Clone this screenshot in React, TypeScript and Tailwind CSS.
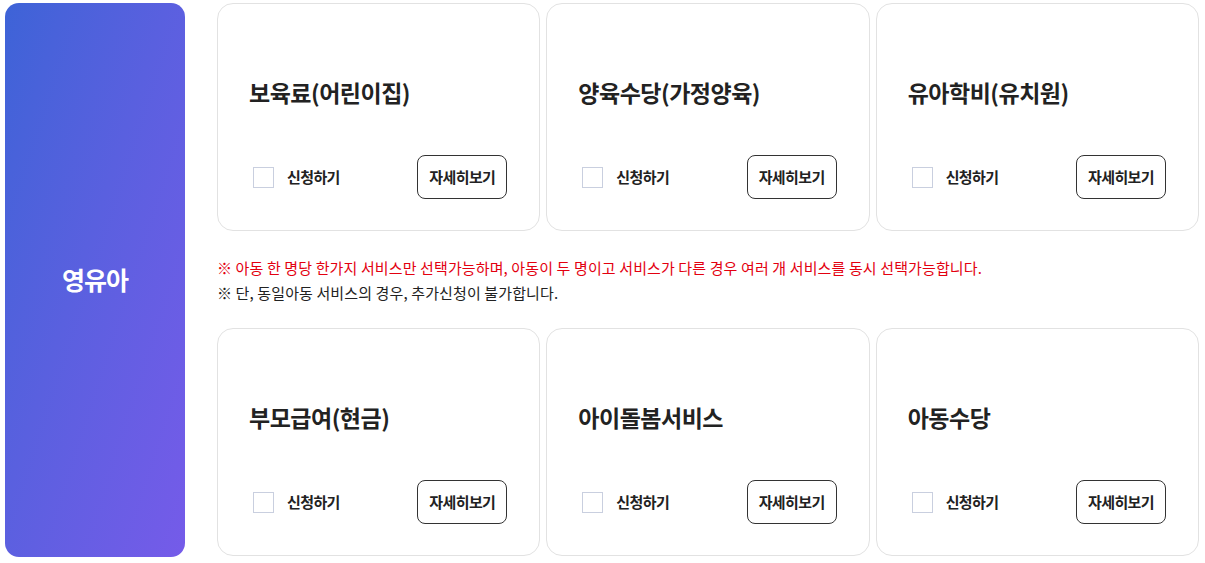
import { useState } from "react";

const FONT = { fontFamily: '"Noto Sans CJK KR", "Noto Sans", sans-serif' };

const TOP_ROW = ["보육료(어린이집)", "양육수당(가정양육)", "유아학비(유치원)"];
const BOTTOM_ROW = ["부모급여(현금)", "아이돌봄서비스", "아동수당"];

function ServiceCard({ title }: { title: string }) {
  const [checked, setChecked] = useState(false);
  return (
    <div className="h-[228px] rounded-2xl border border-[#e2e2e2] bg-white px-8 pt-[71px] pb-[31px] flex flex-col justify-between">
      <h3 className="text-[23px] leading-[34px] font-bold text-[#222] tracking-[-0.5px] -ml-[1px]">{title}</h3>
      <div className="flex items-center justify-between">
        <label className="flex items-center gap-[13px] ml-[3px] cursor-pointer">
          <input type="checkbox" checked={checked} onChange={() => setChecked(!checked)}
            className="appearance-none w-[21px] h-[21px] border border-[#c9cfdf] bg-white checked:bg-[#4a5fe0]" />
          <span className="text-[15px] font-semibold text-[#222] tracking-[-0.6px]">신청하기</span>
        </label>
        <button className="h-[44px] w-[90px] rounded-lg border border-[#333] bg-white text-[15px] font-semibold text-[#222] tracking-[-0.6px]">
          자세히보기
        </button>
      </div>
    </div>
  );
}

export default function App() {
  return (
    <div className="w-[1205px] h-[563px] bg-white flex gap-8 pl-[5px] pr-[6px] pt-[3px] pb-[6px]" style={FONT}>
      {/* Category */}
      <div className="w-[180px] flex-shrink-0 rounded-[14px] bg-gradient-to-br from-[#3d63d7] to-[#755be9] flex items-center justify-center">
        <span className="text-white text-[25px] font-bold tracking-[-1px]">영유아</span>
      </div>

      <div className="flex-1 flex flex-col">
        <div className="grid grid-cols-3 gap-[6px]">
          {TOP_ROW.map(t => <ServiceCard key={t} title={t} />)}
        </div>

        {/* Notice */}
        <div className="pt-[24px] pb-[23px] text-[15px] leading-[25px] tracking-[0.12px]">
          <p className="text-[#e3000f]">※ 아동 한 명당 한가지 서비스만 선택가능하며, 아동이 두 명이고 서비스가 다른 경우 여러 개 서비스를 동시 선택가능합니다.</p>
          <p className="text-[#222]">※ 단, 동일아동 서비스의 경우, 추가신청이 불가합니다.</p>
        </div>

        <div className="grid grid-cols-3 gap-[6px]">
          {BOTTOM_ROW.map(t => <ServiceCard key={t} title={t} />)}
        </div>
      </div>
    </div>
  );
}
